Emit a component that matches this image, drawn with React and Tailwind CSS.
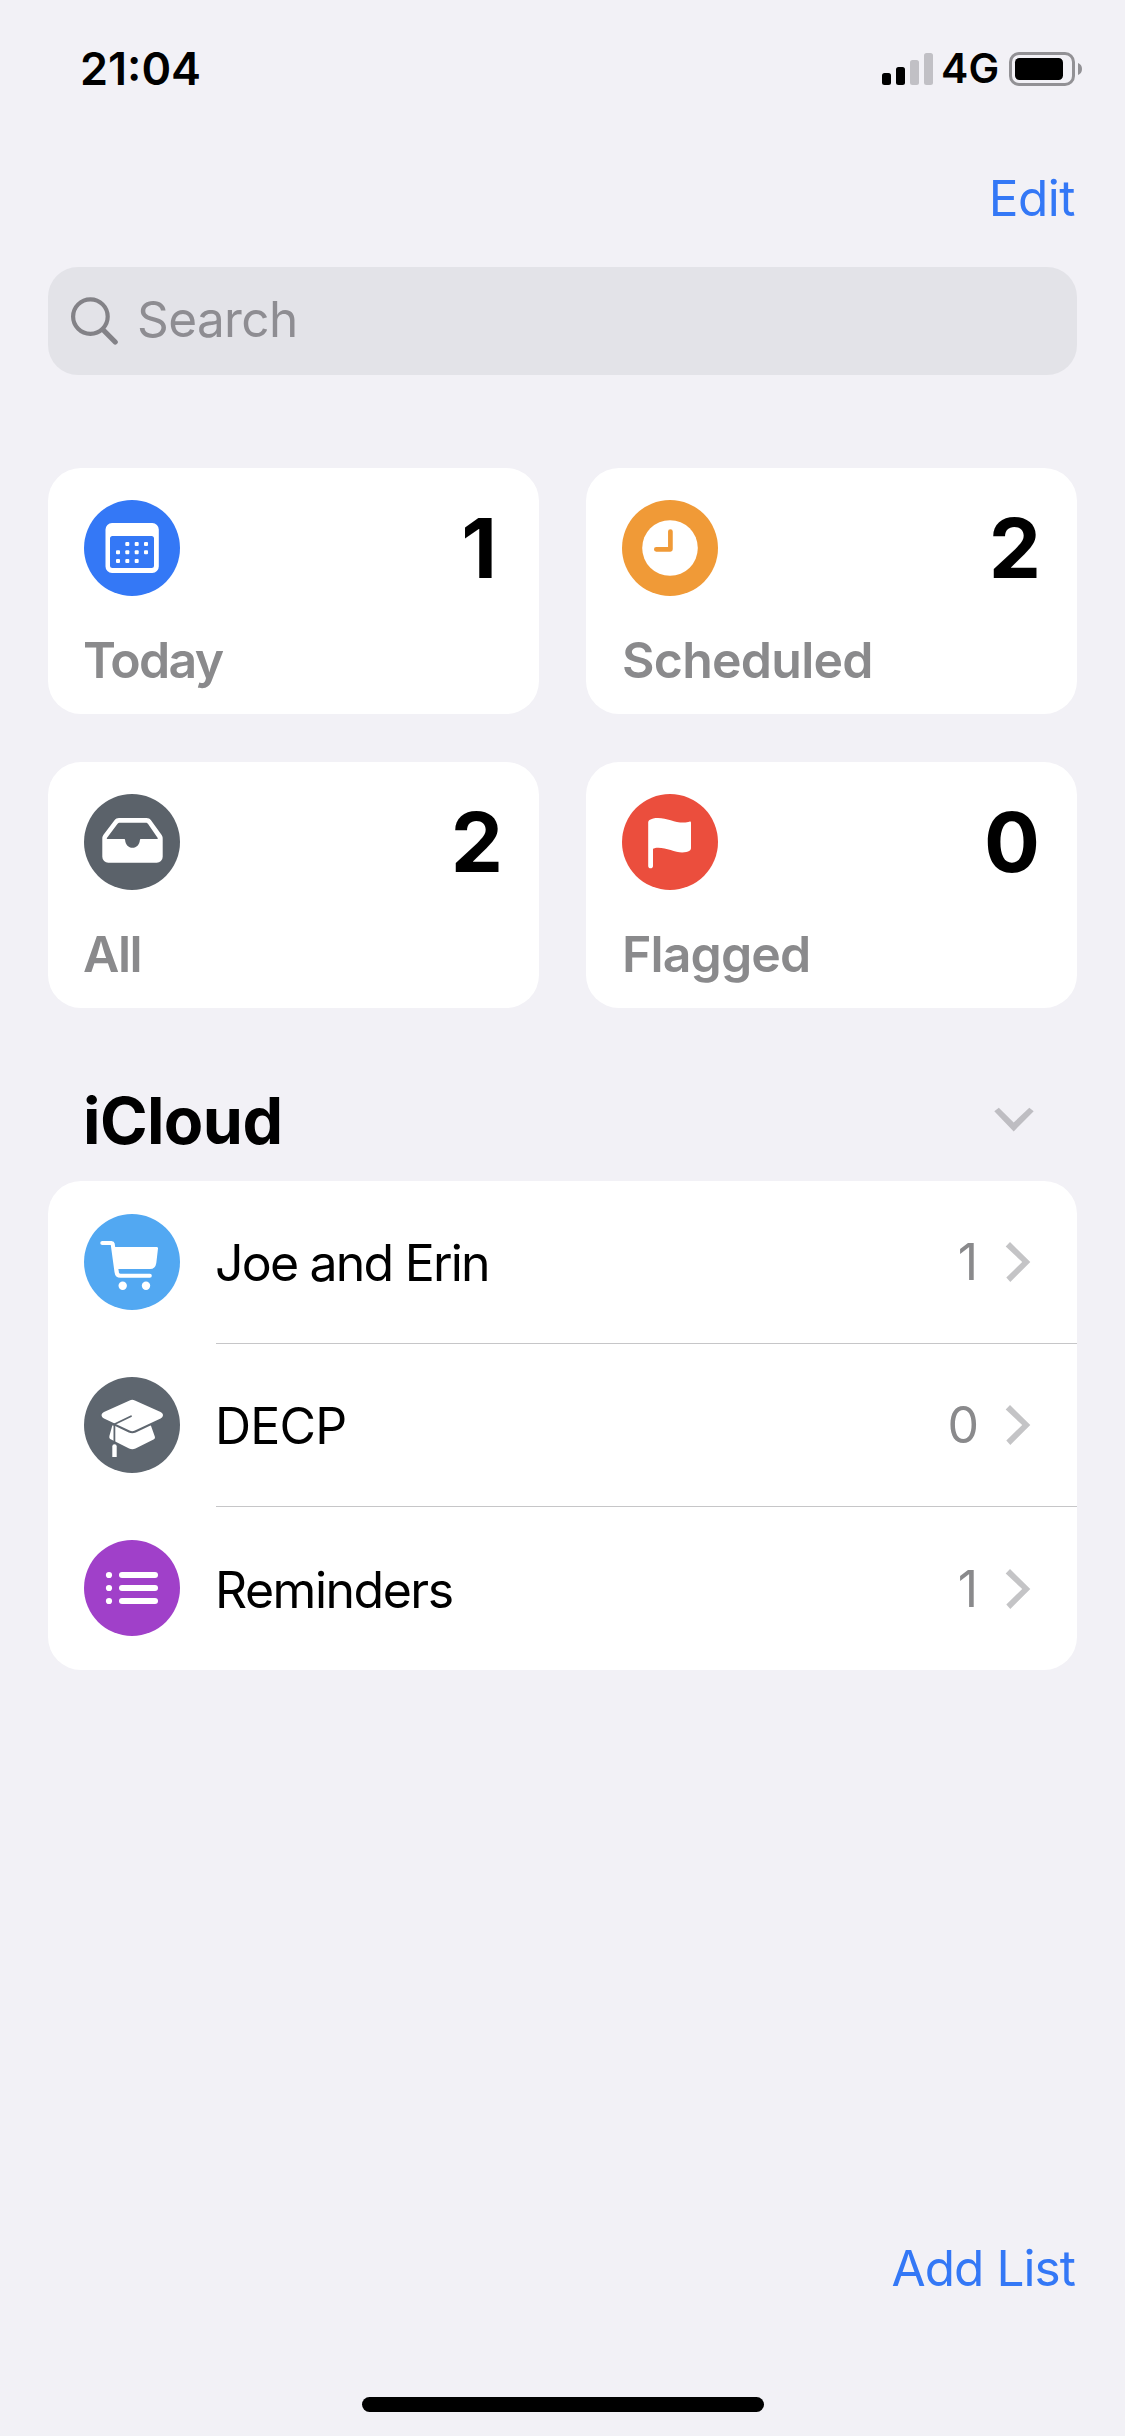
import React from "react";

function CalendarIcon() {
  const dots = [
    [43.3, 44], [52.7, 44], [62, 44],
    [34, 52.3], [43.3, 52.3], [52.7, 52.3], [62, 52.3],
    [34, 60.9], [43.3, 60.9], [52.7, 60.9],
  ];
  return (
    <svg viewBox="0 0 96 96" className="size-24">
      <path
        fill="#fff"
        fillRule="evenodd"
        d="M28 23h40.3a6.5 6.5 0 0 1 6.5 6.5v37a6.5 6.5 0 0 1-6.5 6.5H28a6.5 6.5 0 0 1-6.5-6.5v-37A6.5 6.5 0 0 1 28 23Zm.5 13a2.5 2.5 0 0 0-2.5 2.5v27a2.5 2.5 0 0 0 2.5 2.5h39a2.5 2.5 0 0 0 2.5-2.5v-27a2.5 2.5 0 0 0-2.5-2.5Z"
      />
      {dots.map(([x, y]) => (
        <rect key={`${x}-${y}`} x={x - 2} y={y - 2} width="4" height="4" rx="1" fill="#fff" />
      ))}
    </svg>
  );
}

function ClockIcon() {
  return (
    <svg viewBox="0 0 96 96" className="size-24">
      <circle cx="48" cy="48" r="27.8" fill="#fff" />
      <path d="M48.4 31.6V49.3H34.3" fill="none" stroke="#f09a37" strokeWidth="4.7" strokeLinecap="round" strokeLinejoin="round" />
    </svg>
  );
}

function TrayIcon() {
  return (
    <svg viewBox="0 0 96 96" className="size-24">
      <path
        fill="#fff"
        fillRule="evenodd"
        d="M35 24h27.5c2 0 3.3.7 4.5 2.300L77.300 40.500c1 1.400 1.400 2.300 1.400 4V62.700a6 6 0 0 1-6 6H24.300a6 6 0 0 1-6-6V44.500c0-1.700.4-2.600 1.400-4L30.500 26.300C31.700 24.700 33 24 35 24Zm1 4.800c-1.200 0-1.900.4-2.600 1.300L22.900 44c-.3.5-.1.900.4.900H40c.7 0 1 .3 1.100 1 .4 4.600 3.400 7.900 7.400 7.900s7-3.300 7.400-7.900c.1-.7.4-1 1.100-1h16.300c.5 0 .7-.4.4-.9L64.100 30.100c-.7-.9-1.300-1.300-2.500-1.300Z"
      />
    </svg>
  );
}

function FlagIcon() {
  return (
    <svg viewBox="0 0 96 96" className="size-24">
      <path
        fill="#fff"
        d="M26.200 28.500c0-1 .4-1.800 1.300-2.500 2-1.500 5-2.100 8.500-2.100 9 0 16.500 4.600 25.500 4.600 2.700 0 4.500-.3 5.800-.8 1.100-.4 1.700.2 1.700 1.200V54c0 1.200-.4 2-1.500 2.700-1.700 1.200-4.200 1.700-7.300 1.700-7.200 0-15.500-4.700-24-4.700-2.300 0-4 .5-5.200 1.100V72c0 1.400-1.100 2.300-2.400 2.300S26.200 73.400 26.200 72Z"
      />
    </svg>
  );
}

function CartIcon() {
  return (
    <svg viewBox="0 0 96 96" className="size-24">
      <path d="M18.300 29H27.500q1 0 1.200 1L32.500 57.700Q33 61.800 36.500 61.800H65.800" fill="none" stroke="#fff" strokeWidth="4.100" strokeLinecap="round" strokeLinejoin="round" />
      <path d="M29.500 33H72.500Q74.200 33 74 34.500L72.300 49Q71.400 55 66 55H34.200L34.700 58.500 32.300 59Z" fill="#fff" />
      <circle cx="38.700" cy="71.700" r="4.200" fill="#fff" />
      <circle cx="62" cy="71.700" r="4.200" fill="#fff" />
    </svg>
  );
}

function GraduationIcon() {
  return (
    <svg viewBox="0 0 96 96" className="size-24">
      <path fill="#fff" d="M28.300 48.500L66.800 48.300 70.800 59.500c.5 1.500 0 2.300-1.300 3L51.500 71.500c-2.200 1.100-4.200 1.100-6.400 0L27.200 62.600c-1.500-.8-2.200-1.800-1.800-3.600Z" />
      <path
        fill="#fff"
        stroke="#5e666f"
        strokeWidth="4"
        paintOrder="stroke"
        d="M45.600 23.400c1.900-.9 3.400-.9 5.300 0L76.600 35c3.200 1.500 3.200 4.900 0 6.400L50.900 53.600c-1.900.9-3.400.9-5.300 0L20 41.400c-3.200-1.500-3.200-4.900 0-6.400Z"
      />
      <path d="M47 39.200L30.400 47.300V65" fill="none" stroke="#5e666f" strokeWidth="1.800" strokeLinecap="round" strokeLinejoin="round" />
      <path d="M28.300 80V69.500a2.200 2.200 0 0 1 4.400 0V80Z" fill="#fff" stroke="#5e666f" strokeWidth="3" paintOrder="stroke" />
    </svg>
  );
}

function ListIcon() {
  return (
    <svg viewBox="0 0 96 96" className="size-24">
      {[35, 48, 61].map((y) => (
        <g key={y} fill="#fff">
          <circle cx="25" cy={y} r="3.100" />
          <rect x="35" y={y - 3} width="39" height="6" rx="3" />
        </g>
      ))}
    </svg>
  );
}

const cards = [
  { label: "Today", count: "1", icon: CalendarIcon, circle: "bg-[#3478f6]", labelClass: "-ml-px tracking-[-1.75px]", countClass: "pr-1.5" },
  { label: "Scheduled", count: "2", icon: ClockIcon, circle: "bg-[#f09a37]", labelClass: "tracking-[-0.75px]", countClass: "" },
  { label: "All", count: "2", icon: TrayIcon, circle: "bg-[#5b626a]", labelClass: "-ml-px tracking-[-1.5px]", countClass: "" },
  { label: "Flagged", count: "0", icon: FlagIcon, circle: "bg-[#eb4e3d]", labelClass: "tracking-[-0.88px]", countClass: "pr-px" },
];

const lists = [
  { name: "Joe and Erin", count: "1", icon: CartIcon, circle: "bg-[#52a8f2]", nameClass: "tracking-[-1.8px]", countClass: "pr-[27px]" },
  { name: "DECP", count: "0", icon: GraduationIcon, circle: "bg-[#5e666f]", nameClass: "tracking-[-0.8px]", countClass: "pr-[26px]" },
  { name: "Reminders", count: "1", icon: ListIcon, circle: "bg-[#a040c9]", nameClass: "tracking-[-1.5px]", countClass: "pr-[27px]" },
];

function StatusBar() {
  return (
    <header className="flex h-[138px] items-center pl-20 pr-[43px] text-black">
      <span className="pb-0.5 text-[45px] font-semibold leading-none">21:04</span>
      <svg viewBox="0 0 51 34" className="ml-auto h-[34px] w-[51px]">
        <rect x="0" y="21" width="9" height="12" rx="2.500" fill="#000" />
        <rect x="14" y="15" width="9" height="18" rx="2.500" fill="#000" />
        <rect x="28" y="8" width="9" height="25" rx="2.500" fill="#c1c0c5" />
        <rect x="42" y="1" width="9" height="32" rx="2.500" fill="#c1c0c5" />
      </svg>
      <span className="ml-2 w-[68px] pb-0.5 text-[41px] font-semibold leading-none tracking-[0.2px]">4G</span>
      <svg viewBox="0 0 73 34" className="h-[34px] w-[73px]">
        <rect x="1.500" y="1.500" width="63" height="31" rx="8.500" fill="none" stroke="#929195" strokeWidth="3" />
        <rect x="6" y="6" width="48" height="22" rx="4.500" fill="#000" />
        <path d="M69 11c2.600.9 4 3.300 4 6s-1.400 5.100-4 6Z" fill="#929195" />
      </svg>
    </header>
  );
}

function SummaryCard({ label, count, icon: Icon, circle, labelClass, countClass }) {
  return (
    <section className="h-[246px] rounded-[33px] bg-white px-9 pt-8">
      <div className="flex h-24 items-center justify-between">
        <div className={`size-24 rounded-full ${circle}`}>
          <Icon />
        </div>
        <span className={`text-[83px] font-bold leading-24 text-black ${countClass}`}>{count}</span>
      </div>
      <h2 className={`mt-[34px] text-[50px] font-semibold leading-[60px] text-[#8a8a8c] ${labelClass}`}>{label}</h2>
    </section>
  );
}

function ListRow({ name, count, icon: Icon, circle, nameClass, countClass, last }) {
  return (
    <li className="flex h-[163px] pl-9">
      <div className={`mt-[33px] size-24 shrink-0 rounded-full ${circle}`}>
        <Icon />
      </div>
      <div className={`ml-9 flex h-full flex-1 items-center pr-[46px] ${last ? "" : "border-b border-[#c6c6c8]"}`}>
        <span className={`-ml-px pt-0.5 text-[50px] leading-none text-black ${nameClass}`}>{name}</span>
        <span className={`ml-auto text-[50px] leading-none text-[#8a8a8c] ${countClass}`}>{count}</span>
        <svg viewBox="0 0 26 40" className="h-10 w-[26px]">
          <path d="M.7 4.400L5 0 25.300 20 5.300 40 1.300 35.600 17.200 20Z" fill="#c4c4c6" />
        </svg>
      </div>
    </li>
  );
}

export default function App() {
  return (
    <div className="flex h-[2436px] w-[1125px] flex-col bg-[#f2f1f6] font-['Inter','Liberation_Sans',sans-serif]">
      <StatusBar />
      <div className="flex h-[120px] items-center justify-end pr-[50px] pt-0.5">
        <button className="text-[49.5px] leading-none tracking-[-0.5px] text-[#3478f6]">Edit</button>
      </div>

      <div className="mx-12 mt-[9px] flex h-[108px] items-center rounded-[30px] bg-[#e3e3e8] pl-[23px]">
        <svg viewBox="0 0 48 48" className="h-12 w-12" fill="none" stroke="#838287" strokeLinecap="round">
          <circle cx="19.400" cy="19.600" r="17.300" strokeWidth="4.200" />
          <path d="M32.300 33L44.200 45" strokeWidth="5.200" />
        </svg>
        <span className="ml-[18px] pb-0.5 text-[49.5px] leading-none tracking-[-0.6px] text-[#8e8d92]">Search</span>
      </div>

      <main className="mx-12 mt-[93px] grid grid-cols-2 gap-x-[47px] gap-y-12">
        {cards.map((card) => (
          <SummaryCard key={card.label} {...card} />
        ))}
      </main>

      <div className="mb-1.5 mt-[59px] flex h-[108px] items-center justify-between pl-[83px] pr-[91px]">
        <h1 className="text-[64.5px] font-bold leading-none tracking-[-0.6px] text-black">iCloud</h1>
        <svg viewBox="0 0 40 26" className="mb-0.5 h-[26px] w-10">
          <path d="M.3 4.300L4.800.7 19.700 15.500 35.300.7 39.700 4.300 19.700 24.400Z" fill="#bebdc2" />
        </svg>
      </div>

      <ul className="mx-12 overflow-hidden rounded-[33px] bg-white">
        {lists.map((list, i) => (
          <ListRow key={list.name} {...list} last={i === lists.length - 1} />
        ))}
      </ul>

      <footer className="mt-auto flex flex-col pb-6">
        <div className="flex h-[100px] items-center justify-end pr-[50px] pt-0.5">
          <button className="text-[49.5px] leading-none tracking-[-0.93px] text-[#3478f6]">Add List</button>
        </div>
        <div className="mt-[79px] h-[15px] w-[402px] self-center rounded-full bg-black" />
      </footer>
    </div>
  );
}
